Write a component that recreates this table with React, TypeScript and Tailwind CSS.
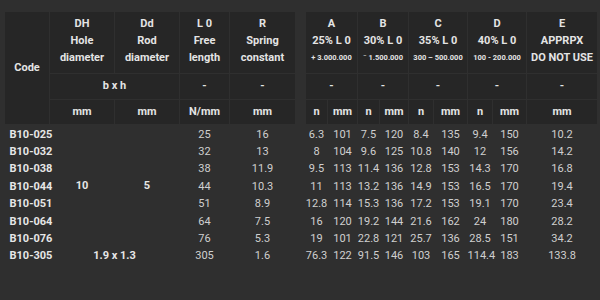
import React from "react";

const th = "border border-[#2f2f2f] bg-[#262626] text-center align-middle font-bold text-[#e4e4e4] p-0";
const tdNum = "text-center text-[#cfcfcf] font-normal p-0 h-[17.4px] leading-[17.4px] whitespace-nowrap";
const tdCode = "pl-[5px] pr-0 py-0 h-[17.4px] leading-[17.4px] font-bold text-[#e6e6e6] whitespace-nowrap";

const leftRows = [
  ["B10-025", "25", "16"],
  ["B10-032", "32", "13"],
  ["B10-038", "38", "11.9"],
  ["B10-044", "44", "10.3"],
  ["B10-051", "51", "8.9"],
  ["B10-064", "64", "7.5"],
  ["B10-076", "76", "5.3"],
];

const rightRows = [
  ["6.3", "101", "7.5", "120", "8.4", "135", "9.4", "150", "10.2"],
  ["8", "104", "9.6", "125", "10.8", "140", "12", "156", "14.2"],
  ["9.5", "113", "11.4", "136", "12.8", "153", "14.3", "170", "16.8"],
  ["11", "113", "13.2", "136", "14.9", "153", "16.5", "170", "19.4"],
  ["12.8", "114", "15.3", "136", "17.2", "153", "19.1", "170", "23.4"],
  ["16", "120", "19.2", "144", "21.6", "162", "24", "180", "28.2"],
  ["19", "101", "22.8", "121", "25.7", "136", "28.5", "151", "34.2"],
  ["76.3", "122", "91.5", "146", "103", "165", "114.4", "183", "133.8"],
];

function Head3({ a, b, c, small }: { a: string; b: string; c: string; small?: boolean }) {
  return (
    <div className="flex flex-col items-center pb-[5px]">
      <span className="leading-[17px]">{a}</span>
      <span className="leading-[17px]">{b}</span>
      {small ? (
        <span className="leading-[17px] text-[7.5px] font-bold whitespace-nowrap">{c}</span>
      ) : (
        <span className="leading-[17px] whitespace-nowrap">{c}</span>
      )}
    </div>
  );
}

export default function App() {
  return (
    <div
      className="w-[600px] h-[300px] bg-[#2f2f2f] flex items-start pt-[11px] pl-[4px] gap-[9px] text-[11px]"
      style={{ fontFamily: "Roboto, 'Liberation Sans', sans-serif" }}
    >
      <table className="table-fixed border-collapse w-[291px]">
        <colgroup>
          <col className="w-[45px]" />
          <col className="w-[65px]" />
          <col className="w-[65px]" />
          <col className="w-[50px]" />
          <col className="w-[66px]" />
        </colgroup>
        <thead>
          <tr className="h-[62px]">
            <th rowSpan={3} className={th}>Code</th>
            <th className={th}><Head3 a="DH" b="Hole" c="diameter" /></th>
            <th className={th}><Head3 a="Dd" b="Rod" c="diameter" /></th>
            <th className={th}><Head3 a="L 0" b="Free" c="length" /></th>
            <th className={th}><Head3 a="R" b="Spring" c="constant" /></th>
          </tr>
          <tr className="h-[26px]">
            <th colSpan={2} className={th}>b x h</th>
            <th className={th}>-</th>
            <th className={th}>-</th>
          </tr>
          <tr className="h-[25px]">
            <th className={th}>mm</th>
            <th className={th}>mm</th>
            <th className={th}>N/mm</th>
            <th className={th}>mm</th>
          </tr>
        </thead>
        <tbody>
          <tr className="h-[1px]"><td colSpan={5} className="p-0 h-[1px]"></td></tr>
          {leftRows.map((r, i) => (
            <tr key={r[0]}>
              <td className={tdCode}>{r[0]}</td>
              {i === 0 && (
                <>
                  <td rowSpan={7} className="text-center font-bold text-[#e6e6e6] p-0 align-middle">10</td>
                  <td rowSpan={7} className="text-center font-bold text-[#e6e6e6] p-0 align-middle">5</td>
                </>
              )}
              <td className={tdNum}>{r[1]}</td>
              <td className={tdNum}>{r[2]}</td>
            </tr>
          ))}
          <tr>
            <td className={tdCode}>B10-305</td>
            <td colSpan={2} className="text-center font-bold text-[#e6e6e6] p-0 whitespace-nowrap">1.9 x 1.3</td>
            <td className={tdNum}>305</td>
            <td className={tdNum}>1.6</td>
          </tr>
        </tbody>
      </table>

      <table className="table-fixed border-collapse w-[292px]">
        <colgroup>
          <col className="w-[22px]" />
          <col className="w-[30px]" />
          <col className="w-[22px]" />
          <col className="w-[29px]" />
          <col className="w-[25px]" />
          <col className="w-[34px]" />
          <col className="w-[25px]" />
          <col className="w-[34px]" />
          <col className="w-[71px]" />
        </colgroup>
        <thead>
          <tr className="h-[62px]">
            <th colSpan={2} className={th}><Head3 a="A" b="25% L 0" c="+ 3.000.000" small /></th>
            <th colSpan={2} className={th}><Head3 a="B" b="30% L 0" c="˜ 1.500.000" small /></th>
            <th colSpan={2} className={th}><Head3 a="C" b="35% L 0" c="300 – 500.000" small /></th>
            <th colSpan={2} className={th}><Head3 a="D" b="40% L 0" c="100 - 200.000" small /></th>
            <th className={th}><Head3 a="E" b="APPRPX" c="DO NOT USE" /></th>
          </tr>
          <tr className="h-[26px]">
            <th colSpan={2} className={th}>-</th>
            <th colSpan={2} className={th}>-</th>
            <th colSpan={2} className={th}>-</th>
            <th colSpan={2} className={th}>-</th>
            <th className={th}>-</th>
          </tr>
          <tr className="h-[25px]">
            <th className={th}>n</th>
            <th className={th}>mm</th>
            <th className={th}>n</th>
            <th className={th}>mm</th>
            <th className={th}>n</th>
            <th className={th}>mm</th>
            <th className={th}>n</th>
            <th className={th}>mm</th>
            <th className={th}>mm</th>
          </tr>
        </thead>
        <tbody>
          <tr className="h-[1px]"><td colSpan={9} className="p-0 h-[1px]"></td></tr>
          {rightRows.map((r, i) => (
            <tr key={i}>
              {r.map((v, j) => (
                <td key={j} className={tdNum}>{v}</td>
              ))}
            </tr>
          ))}
        </tbody>
      </table>
    </div>
  );
}
